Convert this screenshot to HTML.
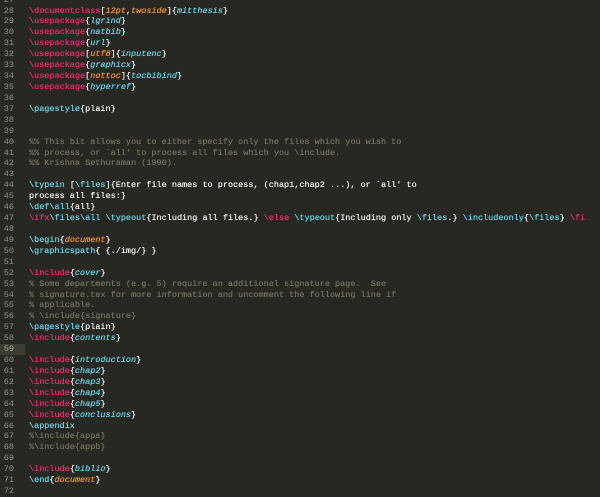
<!DOCTYPE html>
<html><head><style>
html,body{margin:0;padding:0;width:600px;height:494px;overflow:hidden;background:#272822;}
#c{position:absolute;top:-5.4px;left:0;width:600px;font-family:"Liberation Mono",monospace;font-size:8.5px;line-height:10.93px;color:#f8f8f2;}
.l{height:10.93px;white-space:pre;position:relative;}
.t{text-shadow:0 0 0.4px currentColor;}
.n{position:absolute;left:0;width:14px;text-align:right;color:#8f908a;}
.t{position:absolute;left:29px;}
.k{color:#f92672}.f{color:#66d9ef;font-style:italic}.o{color:#fd971f;font-style:italic}.b{color:#66d9ef}.c{color:#75715e}
.hl::before{content:"";position:absolute;left:0;top:0;width:25px;height:100%;background:#3e3d32}
.hl .n{color:#a8a89f}
</style></head><body><div id="c">
<div class="l"><span class="n">27</span></div>
<div class="l"><span class="n">28</span><span class="t"><span class="k">\documentclass</span>[<span class="o">12pt</span>,<span class="o">twoside</span>]{<span class="f">mitthesis</span>}</span></div>
<div class="l"><span class="n">29</span><span class="t"><span class="k">\usepackage</span>{<span class="f">lgrind</span>}</span></div>
<div class="l"><span class="n">30</span><span class="t"><span class="k">\usepackage</span>{<span class="f">natbib</span>}</span></div>
<div class="l"><span class="n">31</span><span class="t"><span class="k">\usepackage</span>{<span class="f">url</span>}</span></div>
<div class="l"><span class="n">32</span><span class="t"><span class="k">\usepackage</span>[<span class="o">utf8</span>]{<span class="f">inputenc</span>}</span></div>
<div class="l"><span class="n">33</span><span class="t"><span class="k">\usepackage</span>{<span class="f">graphicx</span>}</span></div>
<div class="l"><span class="n">34</span><span class="t"><span class="k">\usepackage</span>[<span class="o">nottoc</span>]{<span class="f">tocbibind</span>}</span></div>
<div class="l"><span class="n">35</span><span class="t"><span class="k">\usepackage</span>{<span class="f">hyperref</span>}</span></div>
<div class="l"><span class="n">36</span></div>
<div class="l"><span class="n">37</span><span class="t"><span class="b">\pagestyle</span>{plain}</span></div>
<div class="l"><span class="n">38</span></div>
<div class="l"><span class="n">39</span></div>
<div class="l"><span class="n">40</span><span class="t c">%% This bit allows you to either specify only the files which you wish to</span></div>
<div class="l"><span class="n">41</span><span class="t c">%% process, or `all' to process all files which you \include.</span></div>
<div class="l"><span class="n">42</span><span class="t c">%% Krishna Sethuraman (1990).</span></div>
<div class="l"><span class="n">43</span></div>
<div class="l"><span class="n">44</span><span class="t"><span class="b">\typein</span> [<span class="b">\files</span>]{Enter file names to process, (chap1,chap2 ...), or `all' to</span></div>
<div class="l"><span class="n">45</span><span class="t">process all files:}</span></div>
<div class="l"><span class="n">46</span><span class="t"><span class="b">\def\all</span>{all}</span></div>
<div class="l"><span class="n">47</span><span class="t"><span class="k">\ifx</span><span class="b">\files\all</span> <span class="b">\typeout</span>{Including all files.} <span class="k">\else</span> <span class="b">\typeout</span>{Including only <span class="b">\files</span>.} <span class="b">\includeonly</span>{<span class="b">\files</span>} <span class="k">\fi</span></span></div>
<div class="l"><span class="n">48</span></div>
<div class="l"><span class="n">49</span><span class="t"><span class="b">\begin</span>{<span class="o">document</span>}</span></div>
<div class="l"><span class="n">50</span><span class="t"><span class="b">\graphicspath</span>{ {./img/} }</span></div>
<div class="l"><span class="n">51</span></div>
<div class="l"><span class="n">52</span><span class="t"><span class="k">\include</span>{<span class="f">cover</span>}</span></div>
<div class="l"><span class="n">53</span><span class="t c">% Some departments (e.g. 5) require an additional signature page.  See</span></div>
<div class="l"><span class="n">54</span><span class="t c">% signature.tex for more information and uncomment the following line if</span></div>
<div class="l"><span class="n">55</span><span class="t c">% applicable.</span></div>
<div class="l"><span class="n">56</span><span class="t c">% \include{signature}</span></div>
<div class="l"><span class="n">57</span><span class="t"><span class="b">\pagestyle</span>{plain}</span></div>
<div class="l"><span class="n">58</span><span class="t"><span class="k">\include</span>{<span class="f">contents</span>}</span></div>
<div class="l hl"><span class="n">59</span></div>
<div class="l"><span class="n">60</span><span class="t"><span class="k">\include</span>{<span class="f">introduction</span>}</span></div>
<div class="l"><span class="n">61</span><span class="t"><span class="k">\include</span>{<span class="f">chap2</span>}</span></div>
<div class="l"><span class="n">62</span><span class="t"><span class="k">\include</span>{<span class="f">chap3</span>}</span></div>
<div class="l"><span class="n">63</span><span class="t"><span class="k">\include</span>{<span class="f">chap4</span>}</span></div>
<div class="l"><span class="n">64</span><span class="t"><span class="k">\include</span>{<span class="f">chap5</span>}</span></div>
<div class="l"><span class="n">65</span><span class="t"><span class="k">\include</span>{<span class="f">conclusions</span>}</span></div>
<div class="l"><span class="n">66</span><span class="t"><span class="b">\appendix</span></span></div>
<div class="l"><span class="n">67</span><span class="t c">%\include{appa}</span></div>
<div class="l"><span class="n">68</span><span class="t c">%\include{appb}</span></div>
<div class="l"><span class="n">69</span></div>
<div class="l"><span class="n">70</span><span class="t"><span class="k">\include</span>{<span class="f">biblio</span>}</span></div>
<div class="l"><span class="n">71</span><span class="t"><span class="b">\end</span>{<span class="o">document</span>}</span></div>
<div class="l"><span class="n">72</span></div>
</div></body></html>
